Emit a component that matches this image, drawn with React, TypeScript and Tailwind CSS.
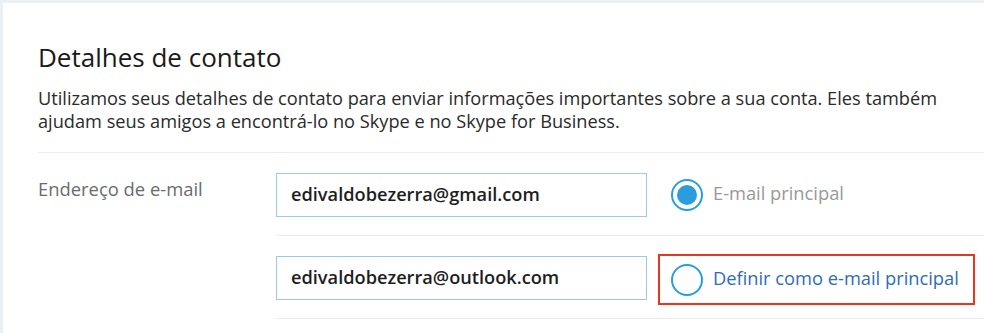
import React from "react";

const font = { fontFamily: '"Open Sans", "Noto Sans", Arial, sans-serif' };

function Radio({ checked }: { checked?: boolean }) {
  return (
    <span className="flex h-[32px] w-[32px] shrink-0 items-center justify-center rounded-full border-[2.5px] border-[#2a9ddc] bg-white">
      {checked && <span className="h-[20px] w-[20px] rounded-full bg-[#2a9ddc]" />}
    </span>
  );
}

function EmailRow({ email, primary }: { email: string; primary?: boolean }) {
  return (
    <div className="flex items-center border-b border-[#e8edf1] pt-[20px] pb-[18px]">
      <div className="flex h-[44px] w-[371px] shrink-0 items-center border border-[#9ccaee] pl-[14px] text-[18.2px] font-semibold text-[#1e1e1e]">
        {email}
      </div>
      {primary ? (
        <div className="ml-[24px] flex items-center gap-[10px]">
          <Radio checked />
          <span className="-mt-[4px] text-[18.3px] text-[#999999]">E-mail principal</span>
        </div>
      ) : (
        <div className="-mt-[2px] -mb-[5px] ml-[11px] flex h-[51px] w-[317px] items-center gap-[10px] border-2 border-[#e8371d] pl-[11px]">
          <Radio />
          <span className="-mt-[4px] text-[18.3px] text-[#2e6cb8]">Definir como e-mail principal</span>
        </div>
      )}
    </div>
  );
}

export default function App() {
  return (
    <div className="h-[333px] w-full overflow-hidden bg-[#ebf0f4] pt-[3px] pl-[3px]" style={font}>
      <div className="h-full bg-white pl-[35px] pt-[38px]">
        <h1 className="text-[26px] leading-[32px] text-[#1a1a1a]">Detalhes de contato</h1>
        <p className="mt-[14px] text-[18.2px] leading-[23px] text-[#2a2a2a]">
          Utilizamos seus detalhes de contato para enviar informações importantes sobre a sua conta. Eles também
          <br />
          ajudam seus amigos a encontrá-lo no Skype e no Skype for Business.
        </p>
        <div className="mt-[19px] flex border-t border-[#e8edf1]">
          <div className="w-[238px] shrink-0 pt-[22px] text-[18.4px] text-[#6b6b6b]">Endereço de e-mail</div>
          <div className="flex-1">
            <EmailRow email="edivaldobezerra@gmail.com" primary />
            <EmailRow email="edivaldobezerra@outlook.com" />
          </div>
        </div>
      </div>
    </div>
  );
}
